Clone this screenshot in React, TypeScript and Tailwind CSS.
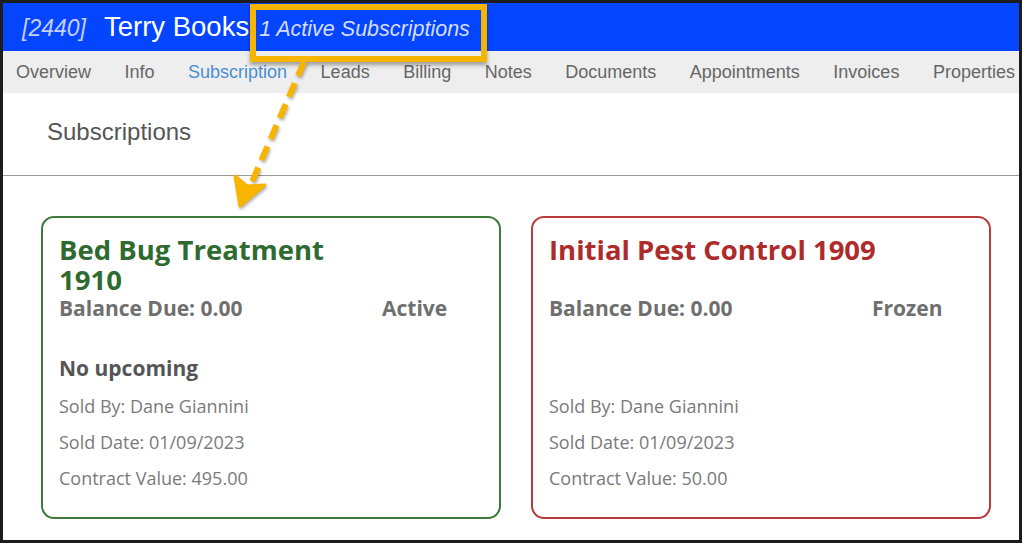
import React from "react";

const tabs = [
  "Overview",
  "Info",
  "Subscription",
  "Leads",
  "Billing",
  "Notes",
  "Documents",
  "Appointments",
  "Invoices",
  "Properties",
];

type CardProps = {
  title: React.ReactNode;
  status: string;
  upcoming?: string;
  value: string;
  tone: "green" | "red";
};

function Card({ title, status, upcoming, value, tone }: CardProps) {
  const border = tone === "green" ? "border-[#3b7a3b]" : "border-[#b83a3a]";
  const titleColor = tone === "green" ? "text-[#2f6b30]" : "text-[#ae2b2b]";
  return (
    <div
      className={`w-[460px] h-[303px] rounded-[13px] border-2 ${border} bg-white pl-[16px] pt-[17px]`}
      style={{ fontFamily: '"Open Sans", sans-serif' }}
    >
      <div className={`h-[60px] text-[27.5px] leading-[30px] font-bold ${titleColor}`}>{title}</div>
      <div className="flex h-[28px] items-center text-[21px] font-bold text-[#6f6f6f]">
        <div className="w-[323px]">Balance Due: 0.00</div>
        <div>{status}</div>
      </div>
      <div className="mt-[31px] h-[28px] text-[21px] leading-[28px] font-bold text-[#555]">
        {upcoming ?? ""}
      </div>
      <div className="mt-[6px] text-[18px] leading-[36px] text-[#7a7a7a]">
        <div>Sold By: Dane Giannini</div>
        <div>Sold Date: 01/09/2023</div>
        <div>Contract Value: {value}</div>
      </div>
    </div>
  );
}

export default function App() {
  return (
    <div className="w-[1024px] h-[546px] bg-white overflow-hidden">
      <div
        className="relative w-[1022px] h-[543px] border-[3px] border-[#1c1c1c] bg-white"
        style={{ fontFamily: '"Liberation Sans", Arial, sans-serif' }}
      >
        {/* Header */}
        <div className="h-[48px] bg-[#0445ff] flex items-center pl-[19px]">
          <div className="flex items-baseline">
            <span className="text-[23px] italic text-[#c4cfff]">[2440]</span>
            <span className="ml-[18px] text-[27.5px] text-white">Terry Books</span>
            <span className="ml-[10px] text-[21.5px] italic text-[#d6ddff]">1 Active Subscriptions</span>
          </div>
        </div>

        {/* Tabs */}
        <div className="h-[42px] bg-[#eeeeee] flex items-center pl-[13px] gap-[33.5px] text-[18px] text-[#666]">
          {tabs.map((t) => (
            <span key={t} className={t === "Subscription" ? "text-[#4a8fd2]" : ""}>
              {t}
            </span>
          ))}
        </div>

        {/* Section title */}
        <div className="h-[82px] flex items-center pl-[44px] pb-[4px] text-[24px] text-[#555]">Subscriptions</div>
        <div className="h-[1px] bg-[#9a9a9a]" />

        {/* Cards */}
        <div className="flex gap-[30px] pl-[38px] pt-[40px]">
          <Card
            tone="green"
            title={
              <>
                Bed Bug Treatment
                <br />
                1910
              </>
            }
            status="Active"
            upcoming="No upcoming"
            value="495.00"
          />
          <Card tone="red" title="Initial Pest Control 1909" status="Frozen" value="50.00" />
        </div>

        {/* Annotation box */}
        <div className="absolute left-[247px] top-[1px] w-[237px] h-[58px] border-[6px] border-[#f7b500] shadow-[0_3px_4px_rgba(0,0,0,0.35)]" />

        {/* Annotation arrow */}
        <svg
          className="absolute left-0 top-0 pointer-events-none"
          width="1016"
          height="537"
          viewBox="3 3 1016 537"
          style={{ filter: "drop-shadow(1px 2px 1.5px rgba(0,0,0,0.3))" }}
        >
          <line
            x1="304"
            y1="62"
            x2="252"
            y2="182"
            stroke="#f7b500"
            strokeWidth="6"
            strokeDasharray="15 8"
          />
          <polygon
            points="240,206 235,176 247,186 265,185"
            fill="#f7b500"
            stroke="#f7b500"
            strokeWidth="3"
            strokeLinejoin="round"
          />
        </svg>
      </div>
    </div>
  );
}
